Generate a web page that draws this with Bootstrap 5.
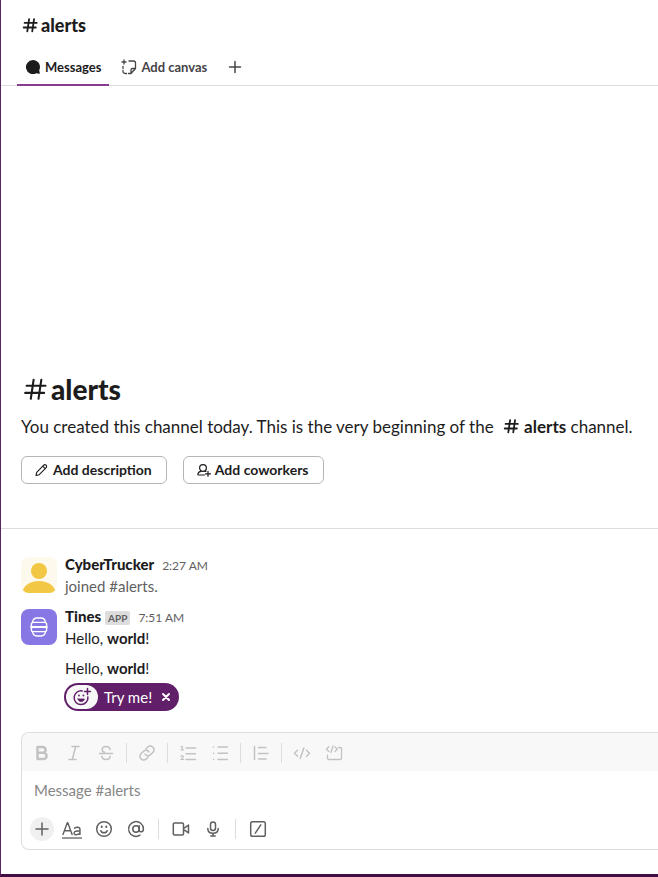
<!DOCTYPE html>
<html lang="en">
<head>
<meta charset="utf-8">
<meta name="viewport" content="width=device-width, initial-scale=1">
<title>alerts</title>
<link rel="stylesheet" href="https://cdn.jsdelivr.net/npm/bootstrap@5.3.0/dist/css/bootstrap.min.css">
<style>
  body { font-family: Lato, "Liberation Sans", sans-serif; font-size: 15px; line-height: 22px; color: #1d1c1d; background: #fff; }
  .shell { border-left: 1px solid #5a2460; border-bottom: 3px solid #410e42; }
  svg { fill: none; stroke: currentColor; stroke-width: 1.5; stroke-linecap: round; stroke-linejoin: round; flex: none; }
  .thick { stroke-width: 2; }
  .heavy { font-weight: 900; }
  .quiet { color: #616061; }
  .topbar { padding: 14px 20px 0; }
  .title { font-size: 18px; line-height: 22px; gap: 2px; }
  .tabs { padding: 0 16px; gap: 4px; margin-top: 12px; border-bottom: 1px solid #dddddd; }
  .tabs .nav-link { display: flex; align-items: center; gap: 4px; height: 38px; margin-bottom: -1px; padding: 2px 8px 0; font-size: 13px; font-weight: 700; line-height: 18px; color: #454447; background: none; border: 0; border-bottom: 2px solid transparent; }
  .tabs .nav-link.active { color: #1d1c1d; border-bottom-color: #863d8d; }
  .intro { padding: 0 0 44px 20px; border-bottom: 1px solid #dddddd; }
  .intro h2 { font-size: 28px; line-height: 36px; gap: 2px; margin: 0 0 6px; }
  .intro p { font-size: 17px; line-height: 28px; margin: 0 0 15px; }
  .hash-inline { vertical-align: -2px; }
  .btn-line { --bs-btn-border-color: #b5b5b6; --bs-btn-color: #1d1c1d; --bs-btn-hover-border-color: #8d8d8e; height: 28px; gap: 4px; padding: 0 14px 0 13px; font-size: 14px; font-weight: 700; line-height: 20px; border-radius: 6px; }
  .feed { padding: 24px 20px 20px; gap: 8px; }
  .post { gap: 8px; }
  .avatar { width: 36px; height: 36px; margin-top: 4px; border-radius: 8px; }
  .stamp { font-size: 12px; line-height: 14px; }
  .tag { font-size: 10px; font-weight: 700; line-height: 14px; padding: 0 3px; border-radius: 2px; background: #dddddd; color: #616061; }
  .tip { height: 28px; margin: 4px 0 0 -1px; padding: 2px 8px 2px 2px; border-radius: 14px; background: #611f69; color: #fff; }
  .tip-icon { width: 32px; height: 24px; border-radius: 12px; background: #f8f8f8; color: #611f69; }
  .tip-label { margin: 0 9px 0 6px; }
  .tip-close { padding: 0; border: 0; background: none; color: inherit; display: flex; }
  .composer { margin: 0 0 24px 20px; border: 1px solid #dddddd; border-right: 0; border-radius: 8px 0 0 8px; }
  .tools { gap: 4px; padding: 6px 6px 4px; background: #f8f8f8; border-radius: 8px 0 0 0; color: #c2c2c2; }
  .actions { gap: 4px; padding: 0 8px 6px; color: #616061; }
  .tool { display: flex; align-items: center; justify-content: center; width: 28px; height: 28px; padding: 0; border: 0; background: none; color: inherit; border-radius: 4px; }
  .tool-round { width: 24px; height: 24px; border-radius: 50%; background: #f0f0f0; }
  .rule { width: 1px; height: 20px; background: #dddddd; margin: 0 2px; }
  .actions .rule { margin: 0 4px; }
  .entry { display: block; width: 100%; height: 44px; padding: 8px 12px; border: 0; outline: 0; resize: none; font-size: 15px; line-height: 22px; color: #1d1c1d; }
  .entry::placeholder { color: #868686; opacity: 1; }
</style>
<script src="https://cdn.jsdelivr.net/npm/bootstrap@5.3.0/dist/js/bootstrap.bundle.min.js"></script>
</head>
<body>
<svg class="d-none" aria-hidden="true">
  <symbol id="hash" viewBox="0 0 20 20"><path d="M9 3.500 7 17M14.500 3.500 12.500 17M4 7.700h13.500M3 12.800h13.500"/></symbol>
</svg>
<div class="shell d-flex flex-column min-vh-100">
  <header>
    <div class="topbar">
      <h1 class="title heavy d-flex align-items-center m-0"><svg class="thick" width="18" height="18"><use href="#hash"/></svg>alerts</h1>
    </div>
    <nav class="tabs nav">
      <button type="button" class="nav-link active"><svg width="16" height="16" viewBox="0 0 16 16"><path fill="currentColor" stroke="none" d="M8 1a7 7 0 1 0 3.200 13.200l3 .5c.4.1.7-.2.6-.6l-.6-2.900A7 7 0 0 0 8 1z"/></svg>Messages</button>
      <button type="button" class="nav-link"><svg width="16" height="16" viewBox="0 0 16 16"><path stroke-width="1.300" d="M3 1v4M1 3h4M8 2h4.500a2 2 0 0 1 2 2v5.500L10 14.500H7.500M5.500 14.500H4a2 2 0 0 1-2-2V11.500M2 9.500V7.500M14.300 9.500H11.500a1.500 1.500 0 0 0-1.500 1.500v3.300"/></svg>Add canvas</button>
      <button type="button" class="nav-link" aria-label="Add tab"><svg width="16" height="16" viewBox="0 0 16 16"><path d="M8 2.500v11M2.500 8h11"/></svg></button>
    </nav>
  </header>

  <main class="flex-grow-1 d-flex flex-column justify-content-end">
    <section class="intro">
      <h2 class="heavy d-flex align-items-center"><svg width="28" height="28"><use href="#hash"/></svg>alerts</h2>
      <p>You created this channel today. This is the very beginning of the <strong class="ms-1 text-nowrap"><svg class="thick hash-inline" width="18" height="18"><use href="#hash"/></svg> alerts</strong> channel.</p>
      <div class="d-flex gap-3">
        <button type="button" class="btn btn-line d-flex align-items-center"><svg width="14" height="14" viewBox="0 0 14 14"><path stroke-width="1.100" d="m1 12.500.7-3.200 6.800-7c.8-.8 1.900-.8 2.600-.1s.7 1.800-.1 2.600l-6.800 6.900L1 12.500zM7.700 3.200l2.500 2.500"/></svg>Add description</button>
        <button type="button" class="btn btn-line d-flex align-items-center"><svg width="14" height="14" viewBox="0 0 14 14"><path stroke-width="1.200" d="M7.500 12H1.700c-.6 0-.9-.4-.8-1C1.200 9.300 2.300 8.600 4 8.400M9 8.500 8 8.300"/><circle stroke-width="1.200" cx="6" cy="5" r="3.400"/><path stroke-width="1.200" d="M11 8.300v5M8.500 10.800h5"/></svg>Add coworkers</button>
      </div>
    </section>

    <section class="feed d-flex flex-column">
      <article class="post d-flex">
        <svg class="avatar" viewBox="0 0 36 36" role="img" aria-label="CyberTrucker"><g stroke="none"><path fill="#fef9ed" d="M0 0h36v36H0z"/><circle cx="18" cy="14" r="8" fill="#f2c744"/><path fill="#f2c744" d="M1.500 36c0-7 7-12 16.500-12s16.500 5 16.500 12z"/></g></svg>
        <div>
          <div class="d-flex align-items-baseline gap-2"><span class="heavy">CyberTrucker</span><time class="stamp quiet">2:27 AM</time></div>
          <div class="quiet">joined #alerts.</div>
        </div>
      </article>
      <article class="post d-flex">
        <svg class="avatar" viewBox="0 0 36 36" role="img" aria-label="Tines"><path fill="#8677e4" stroke="none" d="M0 0h36v36H0z"/><g stroke="#fff" stroke-width="1.300"><path d="M11.500 13.300c.4-2.800 2.200-4.300 4.500-4.300h4c2.300 0 4.100 1.500 4.500 4.300M11.500 22.700c.4 2.800 2.200 4.300 4.500 4.300h4c2.300 0 4.100-1.500 4.500-4.300"/><rect x="10.300" y="13.300" width="15.400" height="4.700" rx="2.200"/><rect x="10.300" y="18" width="15.400" height="4.700" rx="2.200"/><path d="M9.500 18h17"/></g></svg>
        <div>
          <div class="d-flex align-items-baseline gap-2"><span class="d-flex align-items-baseline gap-1"><span class="heavy">Tines</span><span class="tag">APP</span></span><time class="stamp quiet">7:51 AM</time></div>
          <div>Hello, <strong>world</strong>!</div>
          <div class="mt-2">Hello, <strong>world</strong>!</div>
          <div class="tip d-inline-flex align-items-center">
            <span class="tip-icon d-flex align-items-center justify-content-center"><svg width="20" height="20" viewBox="0 0 20 20"><path d="M10.200 3.900A6.900 6.900 0 1 0 15.900 10M15.500 1.500v6M12.500 4.500h6"/><path fill="currentColor" stroke-width=".8" d="M6 12h6.400c-.4 1.700-1.500 2.600-3.200 2.600S6.400 13.700 6 12z"/><path stroke-width="1.800" d="M7 8.300v.3M11.400 8.300v.3"/></svg></span>
            <span class="tip-label">Try me!</span>
            <button type="button" class="tip-close" aria-label="Dismiss"><svg width="10" height="10" viewBox="0 0 10 10"><path stroke-width="2" d="m2 2 6 6M8 2 2 8"/></svg></button>
          </div>
        </div>
      </article>
    </section>

    <form class="composer">
      <div class="tools d-flex align-items-center">
        <button type="button" class="tool" aria-label="Bold"><svg width="18" height="18" viewBox="0 0 18 18"><path stroke-width="2.500" d="M4.500 3h5.200a2.900 2.900 0 0 1 0 5.800H4.500zM4.500 8.800h6a3.100 3.100 0 0 1 0 6.200h-6z"/></svg></button>
        <button type="button" class="tool" aria-label="Italic"><svg width="18" height="18" viewBox="0 0 18 18"><path d="M7 2.500h7M4 15.500h7M10.700 2.500l-3.400 13"/></svg></button>
        <button type="button" class="tool" aria-label="Strikethrough"><svg width="18" height="18" viewBox="0 0 18 18"><path d="M2.500 9.500h13M13 5.500c-.3-2-1.700-3-4-3s-3.900 1.100-3.900 3c0 1.300.7 2.200 2.400 2.800M4.800 12.200c.3 2.200 1.800 3.300 4.200 3.300s4.100-1.200 4.100-3.200"/></svg></button>
        <span class="rule"></span>
        <button type="button" class="tool" aria-label="Link"><svg width="18" height="18" viewBox="0 0 18 18"><path d="M8 4.700 9.800 3a3.500 3.500 0 0 1 5 0l.2.200a3.500 3.500 0 0 1 0 5l-2.600 2.600a3.500 3.500 0 0 1-5.400-.6M10 13.300 8.200 15a3.500 3.500 0 0 1-5 0l-.2-.2a3.500 3.500 0 0 1 0-5l2.600-2.600a3.500 3.500 0 0 1 5.400.6"/></svg></button>
        <span class="rule"></span>
        <button type="button" class="tool" aria-label="Ordered list"><svg width="18" height="18" viewBox="0 0 18 18"><path d="M7 4h9.500M7 9.800h9.500M7 15.500h9.500"/><path stroke-width="1.200" d="m2 3 1.300-.8v3.600M2 5.800h2.600M2 12.300c.8-1 2.400-.6 2.300.5 0 .9-1.400 1.500-2.300 2.700h2.600"/></svg></button>
        <button type="button" class="tool" aria-label="Bulleted list"><svg width="18" height="18" viewBox="0 0 18 18"><path d="M7 3h9.500M7 9.200h9.500M7 15.500h9.500M2.500 3h.1M2.500 9.200h.1M2.500 15.500h.1"/></svg></button>
        <span class="rule"></span>
        <button type="button" class="tool" aria-label="Quote"><svg width="18" height="18" viewBox="0 0 18 18"><path d="M2.500 2.500v13M6.500 3.500H14M6.500 9.500h9.500M6.500 15H14"/></svg></button>
        <span class="rule"></span>
        <button type="button" class="tool" aria-label="Code"><svg width="18" height="18" viewBox="0 0 18 18"><path d="M4.500 6.200 1.500 9.200l3 3M13.500 6.200l3 3-3 3M10.800 4 7.200 14.500"/></svg></button>
        <button type="button" class="tool" aria-label="Code block"><svg width="18" height="18" viewBox="0 0 18 18"><path stroke-width="1.300" d="M3.800 2.800 1.500 5.200l2.300 2.300M10 2.800l2.300 2.400L10 7.500M8 2 6 8.500M13.500 3.500h1.700c.7 0 1.300.6 1.300 1.300v9.400c0 .7-.6 1.300-1.300 1.300H3.800c-.7 0-1.300-.6-1.300-1.300v-3"/></svg></button>
      </div>
      <textarea class="entry" rows="1" placeholder="Message #alerts" aria-label="Message #alerts"></textarea>
      <div class="actions d-flex align-items-center">
        <button type="button" class="tool tool-round" aria-label="Attach"><svg width="16" height="16" viewBox="0 0 16 16"><path d="M8 2v12M2 8h12"/></svg></button>
        <button type="button" class="tool" aria-label="Formatting"><svg width="22" height="20" viewBox="0 0 22 20"><path stroke-width="1.400" d="m2 15.500 4.300-11.800h.5l4.300 11.800M3.500 11.800h6.200M13.500 9.200c1.500-1.500 5.500-1.500 5.500 1.200v5M19 11.700c-4 0-6 .4-6 2.200 0 2.500 5 2.400 6-.5"/><path stroke-width="1.300" stroke-linecap="butt" d="M1 19h20"/></svg></button>
        <button type="button" class="tool" aria-label="Emoji"><svg width="18" height="18" viewBox="0 0 18 18"><circle cx="9" cy="9" r="7.300"/><path d="M5.800 10.800c.8 2.700 5.600 2.700 6.400 0"/><path stroke-width="2" d="M6.700 6.600v.3M11.300 6.600v.3"/></svg></button>
        <button type="button" class="tool" aria-label="Mention"><svg width="18" height="18" viewBox="0 0 18 18"><circle cx="9" cy="9" r="3.200"/><path d="M12.200 5.800V10c0 2.600 4.200 2.400 4.200-1A7.400 7.400 0 1 0 13 15.200"/></svg></button>
        <span class="rule"></span>
        <button type="button" class="tool" aria-label="Record video"><svg width="18" height="18" viewBox="0 0 18 18"><path d="M2.500 3h7.800c.7 0 1.200.5 1.200 1.200v9.600c0 .7-.5 1.200-1.200 1.200H2.500c-.7 0-1.200-.5-1.200-1.200V4.200c0-.7.500-1.200 1.200-1.200zM11.500 7.500l1.500.2 3.500-2.700v8L13 10.300l-1.500.2"/></svg></button>
        <button type="button" class="tool" aria-label="Record audio"><svg width="18" height="18" viewBox="0 0 18 18"><rect x="6.500" y="2" width="5" height="8.500" rx="2.500"/><path d="M3.800 8.500c0 3 2.200 4.800 5.200 4.800s5.200-1.800 5.200-4.800M9 13.300V16M6.800 16h4.400"/></svg></button>
        <span class="rule"></span>
        <button type="button" class="tool" aria-label="Shortcuts"><svg width="18" height="18" viewBox="0 0 18 18"><rect x="1.700" y="1.700" width="14.600" height="14.600" rx="1.800"/><path d="m11.800 4.800-5.500 8.400"/></svg></button>
      </div>
    </form>
  </main>
</div>
</body>
</html>
